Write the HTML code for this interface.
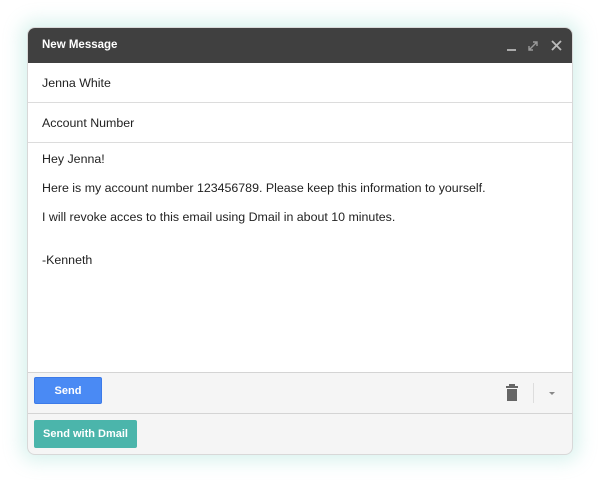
<!DOCTYPE html>
<html><head><style>
html,body{margin:0;padding:0;width:600px;height:482px;background:#fff;overflow:hidden;font-family:"Liberation Sans",Arial,sans-serif;}
.win{position:absolute;left:27px;top:27px;width:546px;height:428px;border-radius:8px;background:#f5f5f5;box-shadow:0 0 18px 6px rgba(120,210,195,0.28);overflow:hidden;border:1px solid #d8d8d8;box-sizing:border-box;}
.hdr{position:absolute;left:0;top:0;width:100%;height:35px;background:#404040;color:#fff;font-size:11.5px;font-weight:bold;}
.hdr .t{position:absolute;left:14px;top:11px;}
.row{position:absolute;left:0;width:100%;height:39px;background:#fff;border-bottom:1px solid #dcdcdc;font-size:12.4px;color:#222;}
.row span{position:absolute;left:14px;top:13px;}
.body{position:absolute;left:0;top:115px;width:100%;height:229px;background:#fff;border-bottom:1px solid #d4d4d4;font-size:12.4px;color:#222;}
.body p{position:absolute;left:14px;margin:0;}
.btn{position:absolute;color:#fff;font-size:11px;font-weight:bold;text-align:center;border-radius:2px;}
</style></head><body>
<div class="win">
 <div class="hdr"><span class="t">New Message</span>
  <svg style="position:absolute;left:476px;top:10px" width="60" height="16">
   <rect x="3" y="11" width="9" height="2" fill="#aaa"/>
   <path d="M25 12 L33 4 M29 4 H33 V8 M25 8 V12 H29" stroke="#999" stroke-width="1.4" fill="none"/>
   <path d="M48 3 L57 12 M57 3 L48 12" stroke="#bbb" stroke-width="1.8" fill="none"/>
  </svg>
 </div>
 <div class="row" style="top:35px"><span>Jenna White</span></div>
 <div class="row" style="top:75px"><span>Account Number</span></div>
 <div class="body">
  <p style="top:9px">Hey Jenna!</p>
  <p style="top:38px">Here is my account number 123456789. Please keep this information to yourself.</p>
  <p style="top:67px">I will revoke acces to this email using Dmail in about 10 minutes.</p>
  <p style="top:110px">-Kenneth</p>
 </div>
 <div class="btn" style="left:6px;top:349px;width:68px;height:27px;line-height:27px;background:#4a8af4;border:1px solid #3c7ae8;box-sizing:border-box;">Send</div>
 <svg style="position:absolute;left:476px;top:355px" width="60" height="20">
  <rect x="2" y="3" width="12" height="2" fill="#666"/><rect x="5" y="1" width="6" height="2" fill="#666"/>
  <rect x="3" y="6" width="10" height="12" fill="#666"/>
  <rect x="29" y="0" width="1" height="20" fill="#ddd"/>
  <path d="M45 9 L51 9 L48 12Z" fill="#888"/>
 </svg>
 <div style="position:absolute;left:0;top:385px;width:100%;height:1px;background:#d4d4d4"></div>
 <div class="btn" style="left:6px;top:392px;width:103px;height:28px;line-height:28px;background:#4bb5ab;">Send with Dmail</div>
</div>
</body></html>
